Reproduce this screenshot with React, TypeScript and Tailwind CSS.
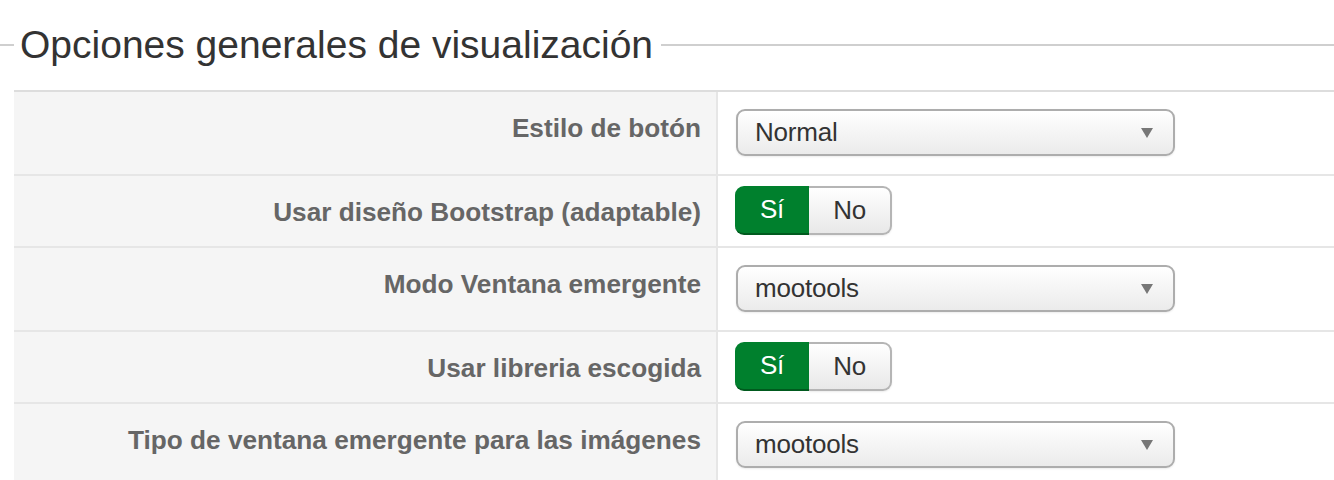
const font = { fontFamily: '"Liberation Sans", Arial, sans-serif' }

type Row =
  | { label: string; kind: 'select'; value: string }
  | { label: string; kind: 'toggle'; on: boolean }

const rows: Row[] = [
  { label: 'Estilo de botón', kind: 'select', value: 'Normal' },
  { label: 'Usar diseño Bootstrap (adaptable)', kind: 'toggle', on: true },
  { label: 'Modo Ventana emergente', kind: 'select', value: 'mootools' },
  { label: 'Usar libreria escogida', kind: 'toggle', on: true },
  { label: 'Tipo de ventana emergente para las imágenes', kind: 'select', value: 'mootools' },
]

function Select({ value }: { value: string }) {
  return (
    <div className="flex items-center justify-between w-[439px] h-[47px] pl-[17px] pr-[20px] border-2 border-[#adadad] rounded-[9px] bg-gradient-to-b from-white to-[#ebebeb] shadow-[0_1px_2px_rgba(0,0,0,0.08)]">
      <span className="text-[26px] text-[#333] tracking-[-0.2px]">{value}</span>
      <svg width="12" height="10" viewBox="0 0 12 10">
        <path d="M0 0h12L6 10z" fill="#777" />
      </svg>
    </div>
  )
}

function Toggle({ on }: { on: boolean }) {
  return (
    <div className="flex h-[49px] text-[26px] tracking-[-0.3px]">
      <div
        className={
          on
            ? 'flex items-center justify-center w-[74px] rounded-l-[9px] bg-[#00802d] border-b-2 border-[#005a1e] text-white'
            : 'flex items-center justify-center w-[74px] rounded-l-[9px] border-2 border-r-0 border-[#b5b5b5] bg-gradient-to-b from-white to-[#e8e8e8] text-[#333]'
        }
      >
        Sí
      </div>
      <div className="flex items-center justify-center w-[83px] rounded-r-[9px] border-2 border-l-0 border-[#b5b5b5] bg-gradient-to-b from-white to-[#e8e8e8] text-[#333] shadow-[0_1px_2px_rgba(0,0,0,0.08)]">
        No
      </div>
    </div>
  )
}

export default function App() {
  return (
    <div className="w-[1334px] h-[480px] bg-white overflow-hidden" style={font}>
      {/* Fieldset legend */}
      <div className="flex items-start pt-[21px] h-[90px]">
        <div className="w-[14px] h-[2px] bg-[#cfcfcf] mt-[23px]" />
        <h2 className="pl-[6px] pr-[8px] text-[39px] leading-[48px] text-[#333]">
          Opciones generales de visualización
        </h2>
        <div className="flex-1 h-[2px] bg-[#cfcfcf] mt-[23px]" />
      </div>

      {/* Options table */}
      <div className="ml-[14px] border-t-2 border-[#dddddd]">
        {rows.map((row, i) => (
          <div
            key={i}
            className={
              i > 0 ? 'flex border-t-2 border-[#e6e6e6]' : 'flex'
            }
          >
            <div className="w-[704px] shrink-0 bg-[#f5f5f5] border-r-2 border-[#e6e6e6] pr-[15px] pt-[22px] text-right text-[26.2px] leading-[28px] font-bold text-[#666]">
              {row.label}
            </div>
            <div
              className={
                row.kind === 'select'
                  ? 'flex-1 pl-[18px] pt-[17px] pb-[18px]'
                  : 'flex-1 pl-[17px] pt-[10px] pb-[11px]'
              }
            >
              {row.kind === 'select' ? <Select value={row.value} /> : <Toggle on={row.on} />}
            </div>
          </div>
        ))}
      </div>
    </div>
  )
}
